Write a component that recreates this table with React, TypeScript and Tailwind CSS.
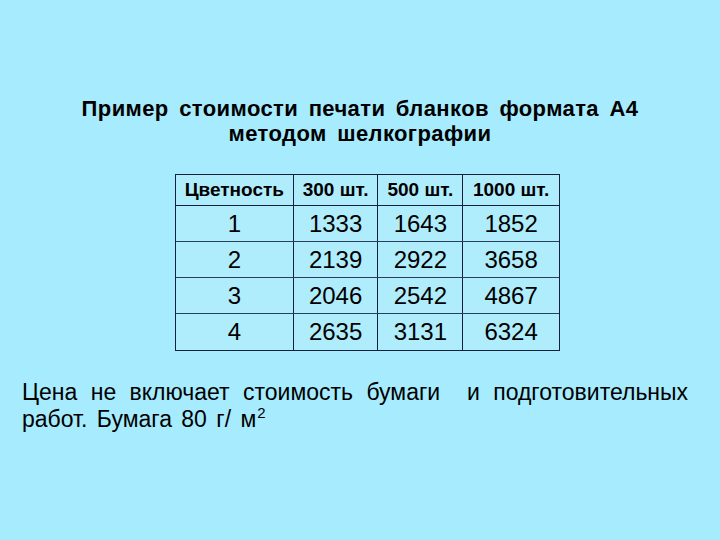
export default function App() {
  const rows = [
    ["1", "1333", "1643", "1852"],
    ["2", "2139", "2922", "3658"],
    ["3", "2046", "2542", "4867"],
    ["4", "2635", "3131", "6324"],
  ];
  const colW = ["w-[118px]", "w-[85px]", "w-[85px]", "w-[96px]"];
  return (
    <div className="w-[720px] h-[540px] bg-[#a6ecfe] text-black font-['Liberation_Sans',Arial,sans-serif] flex flex-col">
      <div className="pt-[96px] text-center font-bold text-[22px] leading-[25px] tracking-[0.4px] [word-spacing:4px]">
        <div>Пример стоимости печати бланков формата А4</div>
        <div>методом шелкографии</div>
      </div>
      <div className="mt-[28px] ml-[175px] w-[385px] border-[1.5px] border-[#14213d] bg-[#b0edfc]">
        <div className="flex h-[31px] border-b-[1.5px] border-[#14213d] font-bold text-[19px] items-center">
          {["Цветность", "300 шт.", "500 шт.", "1000 шт."].map((h, i) => (
            <div key={i} className={`${colW[i]} h-full flex items-center justify-center ${i < 3 ? "border-r-[1.5px] border-[#14213d]" : ""}`}>
              {h}
            </div>
          ))}
        </div>
        {rows.map((r, ri) => (
          <div key={ri} className={`flex h-[36px] text-[24px] ${ri < 3 ? "border-b border-[#2a3d5a]" : ""}`}>
            {r.map((c, i) => (
              <div key={i} className={`${colW[i]} h-full flex items-center justify-center ${i < 3 ? "border-r-[1.5px] border-[#14213d]" : ""}`}>
                {c}
              </div>
            ))}
          </div>
        ))}
      </div>
      <div className="mt-[28px] ml-[22px] text-[23px] leading-[27px] font-['Liberation_Sans',Arial,sans-serif]">
        <div className="[word-spacing:7px]">Цена не включает стоимость бумаги&nbsp; и подготовительных</div>
        <div className="[word-spacing:3px]">
          работ. Бумага 80 г/ м<sup className="text-[15px] relative -top-[9px] ml-[1px]">2</sup>
        </div>
      </div>
    </div>
  );
}
